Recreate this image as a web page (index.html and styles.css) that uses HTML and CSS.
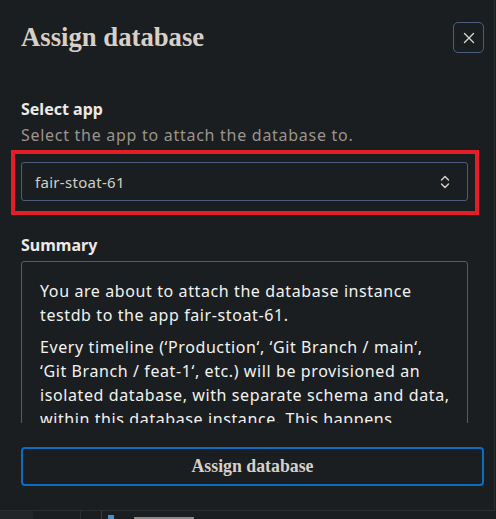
FILE: index.html
```html
<!DOCTYPE html>
<html lang="en">
<head>
<meta charset="utf-8">
<title>Assign database</title>
<link rel="stylesheet" href="styles.css">
</head>
<body>
<div class="modal">
  <div class="header">
    <h1 class="title">Assign database</h1>
    <button class="close" aria-label="Close">
      <svg width="12" height="12" viewBox="0 0 12 12"><path d="M1.5 1.5 L10.5 10.5 M10.5 1.5 L1.5 10.5" stroke="#d8d4cc" stroke-width="1.4" stroke-linecap="round"/></svg>
    </button>
  </div>
  <div class="body">
    <div class="field">
      <div class="label">Select app</div>
      <div class="help">Select the app to attach the database to.</div>
      <div class="select-wrap">
        <div class="select">
          <span class="select-value">fair-stoat-61</span>
          <svg class="chev" width="10" height="14" viewBox="0 0 10 14"><path d="M1.5 5 L5 1.5 L8.5 5 M1.5 9 L5 12.5 L8.5 9" fill="none" stroke="#d8d4cc" stroke-width="1.4" stroke-linecap="round" stroke-linejoin="round"/></svg>
        </div>
        <div class="highlight"></div>
      </div>
    </div>
    <div class="field summary-field">
      <div class="label">Summary</div>
      <div class="summary">
        <p>You are about to attach the database instance testdb to the app fair-stoat-61.</p>
        <p>Every timeline (<span class="tl">‘Production‘,</span> <span class="tl">‘Git Branch / main‘,</span> <span class="tl">‘Git Branch / feat-1‘,</span> etc.) will be provisioned an isolated database, with separate schema and data, within this database instance. This happens automatically when you deploy or push to a branch.</p>
      </div>
    </div>
  </div>
  <div class="footer">
    <button class="primary">Assign database</button>
  </div>
</div>
<div class="underlay">
  <div class="ul-a"></div>
  <div class="ul-b"></div>
  <div class="ul-c"></div>
  <div class="ul-d"><span class="ul-icon"></span><span class="ul-text"></span></div>
</div>
</body>
</html>
```
FILE: styles.css
```css
html, body {
  margin: 0;
  padding: 0;
  background: #1b1e20;
  width: 496px;
  height: 519px;
  overflow: hidden;
}
.modal {
  width: 495px;
  height: 511px;
  box-sizing: border-box;
  border-right: 1px solid #2b2e31;
  border-bottom: 1px solid #2b2e31;
  background: #1b1e20;
  display: flex;
  flex-direction: column;
}
.header {
  display: flex;
  justify-content: space-between;
  align-items: center;
  padding: 22px 10px 0 21px;
  height: 31px;
}
.title {
  margin: 0;
  font-family: "Liberation Serif", serif;
  font-weight: 700;
  font-size: 26.7px;
  line-height: 31px;
  color: #d6d0c8;
}
.close {
  width: 31px;
  height: 31px;
  box-sizing: border-box;
  border: 1.5px solid #4c5d7c;
  border-radius: 5px;
  background: transparent;
  padding: 0;
  display: flex;
  align-items: center;
  justify-content: center;
}
.body {
  height: 370px;
  overflow: hidden;
  padding: 44px 26px 0 21px;
  box-sizing: border-box;
  font-family: "Noto Sans", sans-serif;
}
.label {
  font-weight: 700;
  font-size: 16px;
  line-height: 24px;
  color: #eceae6;
}
.help {
  margin-top: 3px;
  font-size: 16px;
  line-height: 22px;
  letter-spacing: 0.72px;
  color: #9a948c;
}
.select-wrap {
  position: relative;
  margin-top: 16px;
}
.select {
  height: 39px;
  box-sizing: border-box;
  border: 1.5px solid #4c5d7c;
  border-radius: 3px;
  display: flex;
  align-items: center;
  justify-content: space-between;
  padding: 0 17px 0 13px;
}
.select-value {
  font-size: 15px;
  letter-spacing: 0.3px;
  color: #d2cec7;
}
.highlight {
  position: absolute;
  left: -10px;
  top: -12px;
  right: -11px;
  bottom: -14px;
  border: 4px solid #e41e26;
  pointer-events: none;
}
.summary-field {
  margin-top: 32px;
}
.summary {
  margin-top: 4px;
  border: 1.5px solid #4c5d7c;
  border-radius: 3px;
  padding: 13px 12px 13px 18px;
  color: #f2f2f0;
  font-size: 16px;
  line-height: 24px;
  letter-spacing: 0.6px;
}
.summary p {
  margin: 4px 0 8px;
}
.tl {
  white-space: nowrap;
}
.footer {
  padding: 24px 10px 0 21px;
}
.primary {
  width: 100%;
  height: 39px;
  box-sizing: border-box;
  border: 2px solid #0b6cc2;
  border-radius: 4px;
  background: transparent;
  font-family: "Liberation Serif", serif;
  font-weight: 700;
  font-size: 17.8px;
  color: #d6d0c8;
}
.underlay {
  height: 8px;
  display: flex;
  background: #1b1e20;
}
.ul-a { width: 33px; background: #232628; }
.ul-b { width: 47px; border-right: 1px solid #2b2e31; }
.ul-c { width: 20px; border-right: 1px solid #3a3d40; }
.ul-d { flex: 1; display: flex; align-items: flex-end; padding-left: 6px; gap: 20px; }
.ul-icon { width: 6px; height: 4px; background: #3d8fd0; }
.ul-text { width: 60px; height: 2px; background: #8a8a8a; }
```
